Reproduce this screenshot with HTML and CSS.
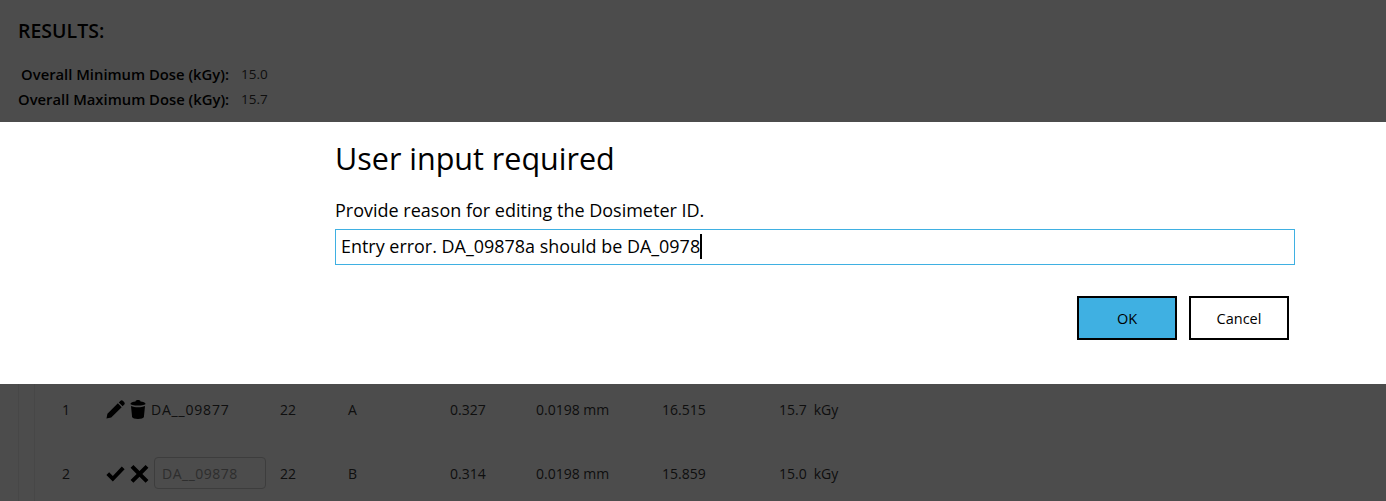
FILE: index.html
```html
<!DOCTYPE html>
<html lang="en">
<head>
<meta charset="utf-8">
<title>Results</title>
<link rel="stylesheet" href="styles.css">
</head>
<body>
<main class="page">
  <h2 class="results-title">RESULTS:</h2>
  <dl class="summary">
    <div class="summary-row"><dt>Overall Minimum Dose (kGy):</dt><dd>15.0</dd></div>
    <div class="summary-row"><dt>Overall Maximum Dose (kGy):</dt><dd>15.7</dd></div>
  </dl>
  <section class="table-wrap">
    <div class="table-inner">
      <div class="row">
        <span>1</span>
        <span class="actions">
          <svg class="icon" viewBox="0 0 20 20"><path d="M15 1C16 0 17 0 18 1L19 2C20 3 20 4 19 5L17.500 6.500 13.500 2.500ZM12.500 3.500L16.500 7.500 5.500 18.500.5 19.500 1.500 14.500Z"/></svg>
          <svg class="icon icon-trash" viewBox="0 0 16 19"><path d="M5.500 1.500C5.500.5 6.500 0 8 0S10.500.5 10.500 1.500C13 1.900 15.500 2.600 15.500 3.800 15.500 5 12 5.600 8 5.600S.5 5 .5 3.800C.5 2.600 3 1.900 5.500 1.500ZM1 6C3 7 5.500 7.200 8 7.200S13 7 15 6L13.900 17C13.700 18.300 11 19 8 19S2.300 18.300 2.100 17Z"/></svg>
          <span class="dosimeter">DA__09877</span>
        </span>
        <span>22</span><span>A</span><span>0.327</span><span>0.0198 mm</span><span>16.515</span>
        <span class="dose"><span>15.7</span><span>kGy</span></span>
      </div>
      <div class="row">
        <span>2</span>
        <span class="actions">
          <svg class="icon" viewBox="0 0 20 20"><path d="M.4 11.600L3.300 8.700 7.200 12.600 16.600 2.500 19.600 5.500 7.200 18.400Z"/></svg>
          <svg class="icon" viewBox="0 0 20 20"><path d="M3.600 1L10 7.400 16.400 1 19.400 4 13 10.400 19.400 16.800 16.400 19.800 10 13.400 3.600 19.800.6 16.800 7 10.400.6 4Z"/></svg>
          <input class="id-input" value="DA__09878" disabled>
        </span>
        <span>22</span><span>B</span><span>0.314</span><span>0.0198 mm</span><span>15.859</span>
        <span class="dose"><span>15.0</span><span>kGy</span></span>
      </div>
    </div>
  </section>
</main>

<div class="backdrop">
  <div class="dialog">
    <div class="dialog-body">
      <h1 class="dialog-title">User input required</h1>
      <p class="dialog-text">Provide reason for editing the Dosimeter ID.</p>
      <div class="field"><span class="field-text">Entry error. DA_09878a should be DA_0978</span><span class="caret"></span></div>
      <div class="buttons">
        <button class="btn btn-primary">OK</button>
        <button class="btn">Cancel</button>
      </div>
    </div>
  </div>
</div>
</body>
</html>
```
FILE: styles.css
```css
* { box-sizing: border-box; }
html, body { margin: 0; height: 100%; overflow: hidden; }
body {
  background: #fff;
  color: #333;
  font-family: "Open Sans", "Noto Sans", sans-serif;
  font-size: 14px;
}
.page { padding: 18px 0 0 18px; height: 501px; display: flex; flex-direction: column; }
.results-title { margin: 0 0 20px; color: #000; font-size: 19.500px; line-height: 26px; font-weight: 600; }
.summary { margin: 0; width: 249px; display: flex; flex-direction: column; gap: 5px; }
.summary-row { display: flex; height: 20px; align-items: center; }
.summary-row dt { width: 211px; flex: none; text-align: right; color: #000; font-size: 14.800px; font-weight: 600; white-space: nowrap; }
.summary-row dd { margin: 0 0 0 12px; font-size: 13.500px; }
.table-wrap { margin-top: 268px; flex: 1; border-left: 1px solid #eee; padding-left: 15px; }
.table-inner { border-left: 1px solid #eee; height: 100%; }
.row {
  display: grid;
  grid-template-columns: 44px 174px 68px 102px 86px 126px 117px 1fr;
  height: 64px;
  align-items: center;
  padding-left: 27px;
  white-space: nowrap;
}
.actions { display: flex; align-items: center; gap: 5px; }
.icon { width: 19px; height: 19px; fill: #000; flex: none; }
.icon-trash { width: 16px; height: 19px; }
.dosimeter { letter-spacing: 0.8px; }
.id-input {
  width: 112px; height: 32px; padding: 0 7px;
  border: 1px solid #ccc; border-radius: 4px; background: #fff;
  color: #999; font: inherit; letter-spacing: 0.5px;
}
.dose { display: flex; gap: 7px; }
.backdrop {
  position: fixed; inset: 0;
  background: rgba(0, 0, 0, 0.7);
  display: flex; align-items: flex-start;
  padding-top: 122px;
}
.dialog { width: 100%; height: 262px; background: #fff; color: #000; }
.dialog-body { margin-left: 335px; width: 960px; display: flex; flex-direction: column; }
.dialog-title { margin: 14px 0 0; font-size: 30.500px; line-height: 44px; font-weight: 400; }
.dialog-text { margin: 18px 0 0; font-size: 18px; line-height: 24px; }
.field {
  margin-top: 7px; height: 36px; border: 1px solid #3fb0e2; padding: 0 5px 2px;
  display: flex; align-items: center; font-size: 17.950px;
}
.caret { width: 2px; height: 25px; background: #000; }
.buttons { margin-top: 31px; padding-right: 6px; display: flex; justify-content: flex-end; gap: 12px; }
.btn {
  width: 100px; height: 44px; background: #fff; border: 2px solid #000; color: #000;
  font: inherit; font-size: 14.500px; padding: 0;
}
.btn-primary { background: #3fb0e2; }
```
